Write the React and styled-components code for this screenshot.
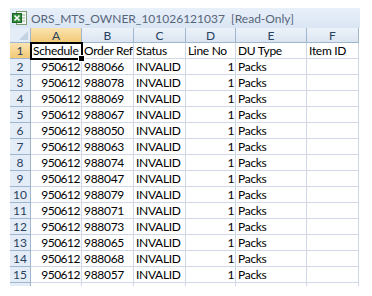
import React from 'react';
import styled, { createGlobalStyle } from 'styled-components';

const GlobalStyle = createGlobalStyle`
  body {
    margin: 0;
    background: #ffffff;
  }
`;

const columns = ['A', 'B', 'C', 'D', 'E', 'F'];
const headings = ['Schedule', 'Order Ref', 'Status', 'Line No', 'DU Type', 'Item ID'];
const orderRefs = [
  '988066', '988078', '988069', '988067', '988050', '988063', '988074',
  '988047', '988079', '988071', '988073', '988065', '988068', '988057',
];

const ExcelIcon = () => (
  <svg width="15" height="14" viewBox="0 0 15 14">
    <rect x="4.5" y="0.5" width="10" height="13" fill="#f4f8f2" stroke="#7a9a74" />
    <line x1="7" y1="4" x2="13" y2="4" stroke="#9bb596" />
    <line x1="7" y1="7" x2="13" y2="7" stroke="#9bb596" />
    <line x1="7" y1="10" x2="13" y2="10" stroke="#9bb596" />
    <rect x="0.5" y="2.5" width="9" height="9" fill="#2f8a3a" stroke="#1d6427" />
    <path d="M2.5 4.5 L7.5 9.5 M7.5 4.5 L2.5 9.5" stroke="#ffffff" strokeWidth="1.6" />
  </svg>
);

const App = () => (
  <>
    <GlobalStyle />
    <Window>
      <TitleBar>
        <ExcelIcon />
        <Title>ORS_MTS_OWNER_101026121037&nbsp;&nbsp;[Read-Only]</Title>
      </TitleBar>
      <Sheet>
        <Corner />
        {columns.map((c, i) => (
          <ColHeader key={c} $active={i === 0}>{c}</ColHeader>
        ))}
        <RowHeader $active>1</RowHeader>
        {headings.map((h, i) => (
          <Cell key={h} $selected={i === 0}>
            {h}
            {i === 0 && <FillHandle />}
          </Cell>
        ))}
        {orderRefs.map((ref, r) => (
          <React.Fragment key={ref}>
            <RowHeader>{r + 2}</RowHeader>
            <Cell $num>950612</Cell>
            <Cell>{ref}</Cell>
            <Cell>INVALID</Cell>
            <Cell $num>1</Cell>
            <Cell>Packs</Cell>
            <Cell />
          </React.Fragment>
        ))}
        <RowHeader />
        {columns.map((c) => (
          <Cell key={c} />
        ))}
      </Sheet>
    </Window>
  </>
);

const Window = styled.div({
  margin: '8px 0 0 10px',
  width: 350,
  height: 278,
  overflow: 'hidden',
  fontFamily: 'Lato, "Liberation Sans", sans-serif',
});

const TitleBar = styled.div({
  height: 20,
  display: 'flex',
  alignItems: 'center',
  gap: 4,
  padding: '0 0 0 2px',
  background: 'linear-gradient(#e8f0f9, #dae6f4)',
});

const Title = styled.span({
  fontSize: 12,
  color: '#56657a',
  whiteSpace: 'nowrap',
});

const Sheet = styled.div({
  display: 'grid',
  gridTemplateColumns: '21px 51px 52px 52px 50px 71px 52px',
  gridTemplateRows: '15px',
  gridAutoRows: '16px',
  background: '#ffffff',
});

const Corner = styled.div({
  position: 'relative',
  background: '#e4ecf7',
  borderRight: '1px solid #9eb6ce',
  borderBottom: '1px solid #9eb6ce',
  '&::after': {
    content: '""',
    position: 'absolute',
    right: 2,
    bottom: 2,
    borderLeft: '9px solid transparent',
    borderBottom: '9px solid #c5d2e2',
  },
});

const ColHeader = styled.div(({ $active }) => ({
  display: 'flex',
  alignItems: 'center',
  justifyContent: 'center',
  fontSize: 12,
  color: '#27415f',
  background: $active
    ? 'linear-gradient(#fae3b0, #f3c976)'
    : 'linear-gradient(#edf2f9, #dbe5f1)',
  borderRight: '1px solid #9eb6ce',
  borderBottom: `1px solid ${$active ? '#f2a93c' : '#9eb6ce'}`,
}));

const RowHeader = styled.div(({ $active }) => ({
  display: 'flex',
  alignItems: 'center',
  justifyContent: 'center',
  fontSize: 12,
  color: '#27415f',
  background: $active ? 'linear-gradient(#fae3b0, #f3c976)' : '#e4ecf7',
  borderRight: `1px solid ${$active ? '#f2a93c' : '#9eb6ce'}`,
  borderBottom: '1px solid #9eb6ce',
}));

const Cell = styled.div(({ $num, $selected }) => ({
  position: 'relative',
  display: 'flex',
  alignItems: 'center',
  justifyContent: $num ? 'flex-end' : 'flex-start',
  padding: '0 1px 0 2px',
  fontSize: 12,
  letterSpacing: $num ? '-0.5px' : '-0.3px',
  color: '#000000',
  whiteSpace: 'nowrap',
  borderRight: '1px solid #d0d7e5',
  borderBottom: '1px solid #d0d7e5',
  outline: $selected ? '2px solid #000000' : 'none',
  outlineOffset: -1,
  zIndex: $selected ? 1 : 'auto',
}));

const FillHandle = styled.span({
  position: 'absolute',
  right: -4,
  bottom: -4,
  width: 5,
  height: 5,
  background: '#000000',
  border: '1px solid #ffffff',
  zIndex: 2,
});

export default App;
